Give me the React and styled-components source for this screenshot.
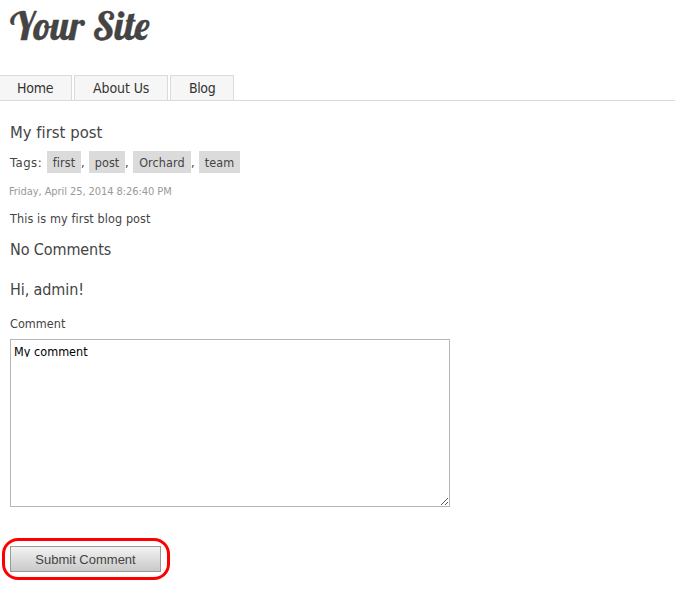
import React from "react";
import styled, { createGlobalStyle } from "styled-components";

const Global = createGlobalStyle`
  * { box-sizing: border-box; }
  body {
    margin: 0;
    background: #fff;
    color: #444;
    font-family: "DejaVu Sans Condensed", "DejaVu Sans", sans-serif;
    font-stretch: condensed;
    overflow: hidden;
  }
`;

const Page = styled.div`
  width: 675px;
  height: 589px;
  display: flex;
  flex-direction: column;
`;

const Header = styled.header`
  height: 75px;
  padding: 2px 0 0 10px;
`;

const SiteTitle = styled.h1`
  margin: 0;
  width: max-content;
  font: normal 38.4px/48px "Lobster", "Liberation Serif", serif;
  color: #444;
  -webkit-text-stroke: 0.3px #444;
`;

const Nav = styled.nav`
  display: flex;
  gap: 2px;
  height: 26px;
  border-bottom: 1px solid #dbdbdb;
`;

const Tab = styled.a`
  width: ${(p) => p.$width}px;
  padding-left: ${(p) => p.$inset}px;
  border: 1px solid #dbdbdb;
  border-bottom: 0;
  border-left-width: ${(p) => (p.$first ? 0 : 1)}px;
  background: #f6f6f6;
  color: #333;
  font-size: 14px;
  line-height: 25px;
  white-space: nowrap;
  letter-spacing: ${(p) => p.$spacing}px;
`;

const Main = styled.main`
  padding: 20px 0 0 10px;
`;

const Heading = styled.h2`
  margin: 0 0 ${(p) => p.$after}px;
  font-size: ${(p) => p.$size || 16}px;
  font-weight: normal;
  line-height: 24px;
  letter-spacing: ${(p) => p.$spacing || 0}px;
`;

const Tags = styled.p`
  display: flex;
  margin: 0;
  height: 22px;
  font-size: 12.5px;
  line-height: 23px;
  letter-spacing: 0.1px;
`;

const TagsLabel = styled.span`
  width: 37px;
  font-size: 13px;
  letter-spacing: 0.5px;
`;

const Tag = styled.a`
  width: ${(p) => p.$width}px;
  text-align: center;
  background: #dbdbdb;
`;

const Comma = styled.span`
  width: 8px;
`;

const Meta = styled.p`
  margin: 10px 0 0 -1px;
  font-size: 11px;
  line-height: 18px;
  letter-spacing: -0.07px;
  color: #999;
`;

const Text = styled.p`
  margin: 9px 0 10px;
  font-size: 12.5px;
  line-height: 18px;
  letter-spacing: 0.1px;
`;

const Label = styled.label`
  display: block;
  font-size: 12.5px;
  line-height: 18px;
  letter-spacing: 0.03px;
`;

const CommentBox = styled.div`
  display: flex;
  justify-content: space-between;
  width: 440px;
  height: 168px;
  margin-top: 6px;
  padding: 4px 0 1px 3px;
  border: 1px solid #b5b5b5;
  color: #000;
`;

const CommentLine = styled.span`
  height: 13px;
  overflow: hidden;
  font-size: 12.5px;
  line-height: 16px;
  letter-spacing: 0.03px;
`;

const Grip = styled.svg`
  align-self: flex-end;
`;

const Highlight = styled.div`
  display: flex;
  width: 168px;
  height: 42px;
  margin: 31px 0 0 -8px;
  padding: 5px;
  border: 3px solid #f00;
  border-radius: 16px;
`;

const SubmitButton = styled.button`
  width: 151px;
  height: 26px;
  padding: 1px 0 0;
  border: 1px solid #999;
  background: linear-gradient(#f3f3f3, #c9c9c9);
  color: #444;
  font: 13px/23px "Liberation Sans", Arial, sans-serif;
  letter-spacing: 0;
`;

const tags = [
  ["first", 34],
  ["post", 36],
  ["Orchard", 58],
  ["team", 41],
];

export default function App() {
  return (
    <Page>
      <Global />
      <Header>
        <SiteTitle>Your Site</SiteTitle>
      </Header>
      <Nav>
        <Tab $first $width={72} $inset={17} $spacing={-0.2}>Home</Tab>
        <Tab $width={94} $inset={18} $spacing={-0.1}>About Us</Tab>
        <Tab $width={64} $inset={18} $spacing={-0.4}>Blog</Tab>
      </Nav>
      <Main>
        <Heading $after={6} $size={16.5} $spacing={0.02}>My first post</Heading>
        <Tags>
          <TagsLabel>Tags:</TagsLabel>
          {tags.map(([name, width], i) => (
            <React.Fragment key={name}>
              <Tag $width={width}>{name}</Tag>
              {i < tags.length - 1 && <Comma>,</Comma>}
            </React.Fragment>
          ))}
        </Tags>
        <Meta>Friday, April 25, 2014 8:26:40 PM</Meta>
        <Text>This is my first blog post</Text>
        <Heading $after={16} $spacing={-0.1}>No Comments</Heading>
        <Heading $after={13} $spacing={-0.1}>Hi, admin!</Heading>
        <Label>Comment</Label>
        <CommentBox role="textbox" aria-multiline="true">
          <CommentLine>My comment</CommentLine>
          <Grip width="8" height="8" viewBox="0 0 8 8" shapeRendering="crispEdges">
            <path
              d="M0 7h1v1H0zM1 6h1v1H1zM2 5h1v1H2zM3 4h1v1H3zM4 3h1v1H4zM5 2h1v1H5zM6 1h1v1H6zM4 7h1v1H4zM5 6h1v1H5zM6 5h1v1H6z"
              fill="#555"
            />
          </Grip>
        </CommentBox>
        <Highlight>
          <SubmitButton>Submit Comment</SubmitButton>
        </Highlight>
      </Main>
    </Page>
  );
}
